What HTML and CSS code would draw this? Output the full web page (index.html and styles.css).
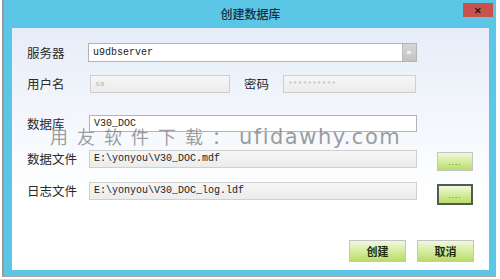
FILE: index.html
```html
<!DOCTYPE html>
<html>
<head>
    <title>创建数据库</title>
    <link rel="stylesheet" href="styles.css">
</head>
<body>

<div class="window">
    <div class="titlebar">
        <span class="title">创建数据库</span>
        <div class="close">&#x2715;</div>
    </div>
    <div class="content">
        <div class="row row-server">
            <label class="label">服务器</label>
            <div class="combo">
                <span class="value">u9dbserver</span>
                <span class="arrow"></span>
            </div>
        </div>
        <div class="row row-user">
            <label class="label">用户名</label>
            <div class="field disabled short">sa</div>
            <label class="label pwd-label">密码</label>
            <div class="field disabled pwd">**********</div>
        </div>
        <div class="row row-db">
            <label class="label">数据库</label>
            <div class="field wide">V30_DOC</div>
        </div>
        <div class="row row-data">
            <label class="label">数据文件</label>
            <div class="field disabled wide">E:\yonyou\V30_DOC.mdf</div>
            <button class="btn browse">....</button>
        </div>
        <div class="row row-log">
            <label class="label">日志文件</label>
            <div class="field disabled wide">E:\yonyou\V30_DOC_log.ldf</div>
            <button class="btn browse focused">....</button>
        </div>
        <div class="actions">
            <button class="btn action">创建</button>
            <button class="btn action">取消</button>
        </div>
        <div class="watermark"><span class="wm-cn">用友软件下载：</span><span class="wm-en">ufidawhy.com</span></div>
    </div>
</div>

</body>
</html>
```

FILE: styles.css
```css
body {
    margin: 0;
    padding: 0;
    background-color: #ffffff;
    font-family: "Noto Sans CJK SC", "Noto Sans", sans-serif;
}
.window {
    margin-left: 2px;
    width: 494px;
    height: 277px;
    border-left: 2px solid #9a9a9a;
    border-bottom: 2px solid #a8a8a8;
    background-color: #5cc6e6;
    padding: 0 7px 5px 8px;
    box-sizing: border-box;
    display: flex;
    flex-direction: column;
}
.titlebar {
    height: 28px;
    display: flex;
    align-items: center;
    justify-content: center;
    position: relative;
}
.title {
    font-size: 12px;
    color: #15303f;
    font-weight: 500;
    margin-top: -2px;
}
.close {
    position: absolute;
    right: -4px;
    top: 3px;
    width: 30px;
    height: 14px;
    background-color: #c9524c;
    color: #1a1a1a;
    font-size: 9px;
    font-weight: bold;
    display: flex;
    align-items: center;
    justify-content: center;
}
.content {
    flex: 1;
    position: relative;
    background: linear-gradient(to bottom, #e6edf8 0%, #f6f9fd 45%, #ffffff 70%);
    padding-left: 15px;
}
.row {
    display: flex;
    align-items: center;
}
.label {
    width: 61px;
    font-size: 12.5px;
    line-height: 14px;
    color: #2a2a2a;
    flex-shrink: 0;
}
.row-server {
    margin-top: 15px;
    height: 19px;
}
.row-user {
    margin-top: 13px;
    height: 18px;
}
.row-db {
    margin-top: 22px;
    height: 17px;
}
.row-data {
    margin-top: 18px;
    height: 18px;
}
.row-log {
    margin-top: 14px;
    height: 18px;
}
.combo, .field {
    height: 100%;
    box-sizing: border-box;
    border: 1px solid #b4b4b4;
    background-color: #ffffff;
    font-family: "Liberation Mono", monospace;
    font-size: 10px;
    line-height: 12px;
    color: #222;
    padding-left: 4px;
    display: flex;
    align-items: center;
}
.combo {
    width: 329px;
    justify-content: space-between;
    padding-right: 0;
}
.arrow {
    width: 13px;
    height: 100%;
    background: linear-gradient(to bottom, #d6d6d6, #c4c4c4);
    border-left: 1px solid #bdbdbd;
    position: relative;
}
.arrow::after {
    content: "";
    position: absolute;
    left: 4px;
    top: 7px;
    width: 4px;
    height: 3px;
    background-color: #eeeeee;
}
.field.wide {
    width: 328px;
    margin-left: 1px;
}
.field.short {
    width: 140px;
    margin-left: 2px;
}
.field.pwd {
    width: 133px;
}
.field.disabled {
    background: linear-gradient(to bottom, #f6f6f6, #ececec);
    border-color: #cfcfcf;
}
.row-user .field {
    color: #b8b8b8;
    font-size: 8px;
}
.pwd-label {
    width: 39px;
    margin-left: 14px;
}
.btn {
    font-family: "Noto Sans CJK SC", sans-serif;
    border: 1px solid #c4c4c4;
    background: linear-gradient(to bottom, #f1f8e2 0%, #d8eea4 45%, #b9dd6a 100%);
    color: #1e2a10;
    padding: 0;
    cursor: pointer;
}
.browse {
    width: 36px;
    height: 19px;
    margin-left: 20px;
    margin-top: 4px;
    font-size: 8px;
    color: #6b8a3a;
    letter-spacing: 1px;
}
.browse.focused {
    border: 2px solid #555a50;
    height: 21px;
    margin-top: 6px;
}
.actions {
    display: flex;
    justify-content: flex-end;
    gap: 11px;
    margin-top: 40px;
    padding-right: 15px;
}
.action {
    width: 57px;
    height: 22px;
    font-size: 11px;
    font-weight: bold;
}
.watermark {
    position: absolute;
    left: 38px;
    top: 99px;
    line-height: 18px;
    color: rgba(125, 125, 125, 0.75);
    white-space: nowrap;
    display: flex;
    align-items: baseline;
}
.wm-cn {
    font-size: 18px;
    letter-spacing: 9px;
}
.wm-en {
    font-family: "DejaVu Sans", sans-serif;
    font-size: 21px;
    letter-spacing: 1.5px;
}
```
